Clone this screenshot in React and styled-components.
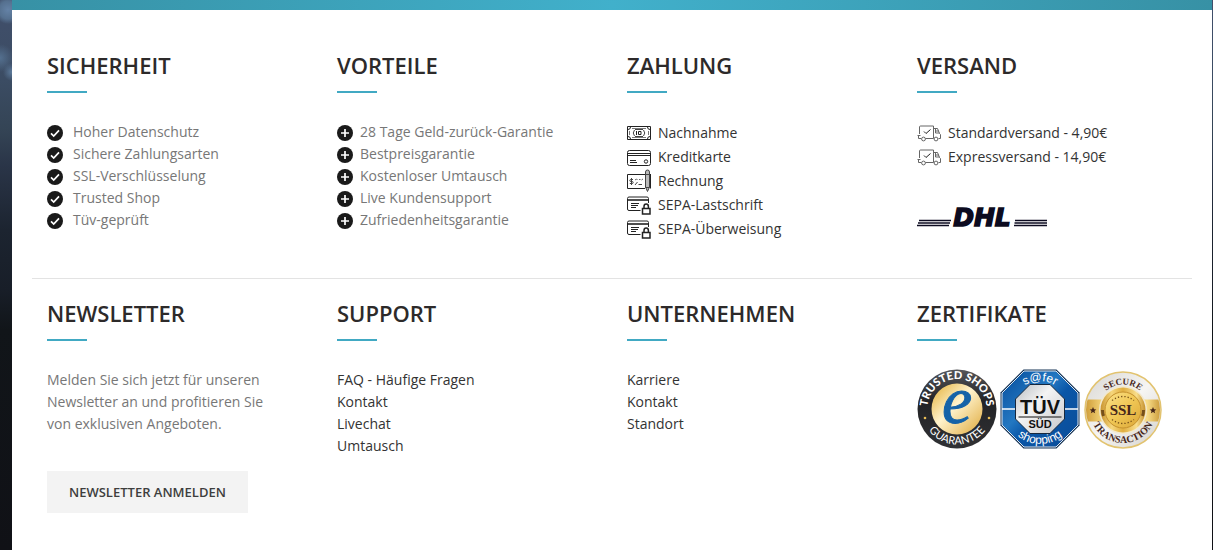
import React from "react";
import styled, {createGlobalStyle} from "styled-components";

const GlobalStyle = createGlobalStyle`
  * {
    box-sizing: border-box;
  }
  body {
    margin: 0;
    font-family: "Open Sans", "Noto Sans", sans-serif;
    font-size: 14px;
    line-height: 22px;
    color: #777;
    background: #101216;
  }
`;

const PageStyles = styled.div`
  min-height: 100vh;
  padding: 0 1px 0 12px;
  display: flex;
  flex-direction: column;
  background:
    radial-gradient(circle at 8px 10px, #6482a6 0, #55708f 9px, transparent 14px),
    radial-gradient(circle at 12px 72px, #5d7b9c 0, transparent 9px),
    radial-gradient(circle at 0 58px, #54708f 0, transparent 14px),
    linear-gradient(
      #414f6b 0,
      #3b4c63 80px,
      #344455 130px,
      #2a3548 165px,
      #1c2430 230px,
      #181e28 290px,
      #111519 330px,
      #101116 550px
    );
`;

const TopBar = styled.div`
  height: 10px;
  background: radial-gradient(circle, #41b0cb 0, #3791a5 100%);
`;

const Footer = styled.footer`
  flex: 1;
  padding: 0 20px;
  background: #fff;
`;

const Row = styled.div`
  display: grid;
  grid-template-columns: repeat(4, 1fr);
  padding: ${(p) => (p.$first ? "40px 0 37px" : "19px 0 36px")};
  border-bottom: ${(p) => (p.$first ? "1px solid #e3e3e3" : "none")};
`;

const Column = styled.section`
  padding: 0 15px;
`;

const Title = styled.h2`
  margin: 0 0 28px;
  font-size: 22px;
  font-weight: 600;
  line-height: 30px;
  color: #2d2a2a;
  text-transform: uppercase;

  &::after {
    content: "";
    display: block;
    width: 40px;
    height: 2px;
    margin-top: 11px;
    background: #41a9c3;
  }
`;

const List = styled.ul`
  margin: 0;
  padding: 0;
  list-style: none;
`;

const Item = styled.li`
  display: flex;
  align-items: center;
  gap: ${(p) => p.$gap || 7}px;
  min-height: 22px;

  svg {
    flex: none;
    margin-top: 2px;
  }
`;

const LinkItem = styled.li`
  a {
    display: flex;
    align-items: center;
    gap: 7px;
    color: #333;
    text-decoration: none;
  }
  a:hover {
    color: #41a9c3;
  }
  svg {
    flex: none;
    height: 24px;
  }
`;

const Text = styled.p`
  margin: 0 0 36px;
  padding-right: 30px;
`;

const Button = styled.button`
  height: 42px;
  padding: 0 22px;
  border: 0;
  background: #f3f3f3;
  color: #3e3e3e;
  font-family: inherit;
  font-size: 13px;
  font-weight: 600;
  text-transform: uppercase;
  cursor: pointer;
`;

const Carrier = styled.div`
  margin-top: 36px;

  svg {
    display: block;
  }
`;

const Badges = styled.div`
  display: flex;
  align-items: center;
  gap: 3px;
`;

const CheckIcon = () => (
  <svg width="16" height="16" viewBox="0 0 16 16" aria-hidden="true">
    <circle cx="8" cy="8" r="8" fill="#1a1a1a" />
    <path d="M4 8.4 6.7 11 12 5.4" fill="none" stroke="#fff" strokeWidth="1.7" />
  </svg>
);

const PlusIcon = () => (
  <svg width="16" height="16" viewBox="0 0 16 16" aria-hidden="true">
    <circle cx="8" cy="8" r="8" fill="#1a1a1a" />
    <path d="M8 4v8M4 8h8" stroke="#fff" strokeWidth="1.7" />
  </svg>
);

const LineIcon = ({children}) => (
  <svg
    width="24"
    height="24"
    viewBox="0 0 24 24"
    fill="none"
    stroke="#222"
    strokeWidth="1"
    aria-hidden="true"
  >
    {children}
  </svg>
);

const CashIcon = () => (
  <LineIcon>
    <path d="M.5 5.500h23v13H.5z" />
    <path d="M5 7.500h14M5 16.500h14M2.500 10v4M21.500 10v4" stroke="#777" />
    <path d="M1 8.500q2.500 0 2.500-2.500M23 8.500q-2.500 0-2.500-2.500M1 15.500q2.500 0 2.500 2.500M23 15.500q-2.500 0-2.500 2.500" />
    <path d="M7.500 9q-2.500 3 0 6M16.500 9q2.500 3 0 6M8 8.500h8M8 15.500h8" stroke="#444" />
    <path d="M9.500 10v4M11.500 10.500h2.500v3h-2.500z" />
  </LineIcon>
);

const CreditCardIcon = () => (
  <LineIcon>
    <rect x=".5" y="5.500" width="23" height="15" rx="2" />
    <path d="M.5 8.500h23M.5 10.500h23M3 15.500h6M3 17.500h7" />
    <circle cx="19" cy="16.500" r="1.700" />
  </LineIcon>
);

const InvoiceIcon = () => (
  <LineIcon>
    <path d="M18 5.500H.5v14H18M23.500 5v14.500" />
    <path
      d="M18.500 3q0-2 2-2t2 2v15l-2 4.500-2-4.500z"
      fill="#bbb"
      stroke="#444"
    />
    <path d="M18.500 5.500h4M18.500 18.500h4" stroke="#444" />
    <path d="M6 10.500H3.800q-1 0-1 1t1 1h1.400q1 0 1 1t-1 1H2.800M4.500 9v7" stroke="#444" />
    <path d="M8 11l1.500-1 1 1M12 10.500h1.500M14.500 11l1.500-1" stroke="#666" />
    <path d="M8 16l2.500-3M11.500 15.500H15" stroke="#444" />
  </LineIcon>
);

const SepaIcon = () => (
  <LineIcon>
    <path d="M21.500 10V5.500Q21.500 4 20 4H2Q.5 4 .5 5.500V16q0 1.500 1.500 1.500h11.500" />
    <path d="M.5 7h21" strokeWidth="1.600" />
    <path d="M4 10.500h8M4 12.500h7M4 14.500h5" />
    <path d="M15.500 15.500h7.500v5.500h-7.500zM17 15.500v-2q0-2.500 2.200-2.500t2.200 2.500v2" strokeWidth="1.500" />
  </LineIcon>
);

const TruckIcon = () => (
  <LineIcon>
    <g stroke="#666">
      <path d="M4 17.500H1.500V15M2.500 13V6q0-1 1-1h13v12.500H8.500M.5 14.500h3" />
      <path d="M16.500 7.500h4l2 5 1 1v4h-2M18.500 7.500v4.500h4M18 10h4" />
      <circle cx="6.500" cy="18" r="1.900" />
      <circle cx="19" cy="18" r="1.900" />
    </g>
    <path d="M7 10.500l2 2 4.500-4" />
  </LineIcon>
);

const DhlLogo = () => (
  <svg width="130" height="24" viewBox="0 0 130 24" role="img" aria-label="DHL">
    <path
      d="M2 15.500h32M1 18h32M0 20.500h32M98 15.500h32M97.500 18H130M97 20.500h33"
      stroke="#0c0b20"
      strokeWidth="1.400"
    />
    <text
      x="65"
      y="21"
      textAnchor="middle"
      fontFamily="DejaVu Sans, sans-serif"
      fontSize="25"
      fontWeight="700"
      fontStyle="oblique"
      fill="#0c0b20"
      stroke="#0c0b20"
      strokeWidth="1.500"
    >
      DHL
    </text>
  </svg>
);

const TrustedShops = () => (
  <svg width="80" height="80" viewBox="0 0 80 80" role="img" aria-label="Trusted Shops Guarantee">
    <defs>
      <linearGradient id="tsGold" x1="0" y1="0" x2="1" y2="1">
        <stop offset="0.1" stopColor="#e9bd55" />
        <stop offset="0.45" stopColor="#fff3cd" />
        <stop offset="1" stopColor="#dfa93a" />
      </linearGradient>
      <linearGradient id="tsRing" x1="0" y1="0" x2="0" y2="1">
        <stop offset="0" stopColor="#55565a" />
        <stop offset="0.4" stopColor="#222326" />
        <stop offset="1" stopColor="#303134" />
      </linearGradient>
      <path id="tsTop" d="M11.200 46A29.500 29.500 0 1 1 68.800 46" />
      <path id="tsBottom" d="M4.500 40A35.500 35.500 0 0 0 75.500 40" />
    </defs>
    <circle cx="40" cy="40" r="39.500" fill="url(#tsRing)" />
    <circle cx="40" cy="40" r="25.500" fill="url(#tsGold)" />
    <g fontFamily="Lato" fill="#fff" textAnchor="middle">
      <text fontSize="11" fontWeight="900">
        <textPath href="#tsTop" startOffset="50%">TRUSTED SHOPS</textPath>
      </text>
      <text fontSize="11">
        <textPath href="#tsBottom" startOffset="50%">GUARANTEE</textPath>
      </text>
    </g>
    <circle cx="8" cy="49" r="1.300" fill="#e9bd55" />
    <circle cx="72" cy="49" r="1.300" fill="#e9bd55" />
    <text
      x="40"
      y="54"
      textAnchor="middle"
      fontFamily="Liberation Serif"
      fontStyle="italic"
      fontSize="68"
      fill="#1563a8"
      stroke="#1563a8"
      strokeWidth="1"
    >
      e
    </text>
  </svg>
);

const TuvBadge = () => (
  <svg width="80" height="80" viewBox="0 0 80 80" role="img" aria-label="TÜV Süd safer shopping">
    <defs>
      <linearGradient id="tuvBlue" x1="0" y1="0" x2="1" y2="1">
        <stop offset="0" stopColor="#064c9b" />
        <stop offset="0.4" stopColor="#2378c2" />
        <stop offset="0.55" stopColor="#0a56a7" />
        <stop offset="1" stopColor="#0a4c98" />
      </linearGradient>
      <linearGradient id="tuvSilver" x1="0" y1="0" x2="1" y2="1">
        <stop offset="0" stopColor="#b9bcc0" />
        <stop offset="0.4" stopColor="#f4f4f4" />
        <stop offset="1" stopColor="#c4c6c9" />
      </linearGradient>
      <path id="tuvTop" d="M12 40A28 28 0 0 1 68 40" />
      <path id="tuvBottom" d="M5 40A35 35 0 0 0 75 40" />
    </defs>
    <path d="M23.500.5h33l23 23v33l-23 23h-33l-23-23v-33z" fill="#173557" />
    <path
      d="M24 2h32l22 22v32L56 78H24L2 56V24z"
      fill="url(#tuvBlue)"
      stroke="#dfe6ee"
      strokeWidth="1"
    />
    <path d="M2 40h14M64 40h14" stroke="#fff" strokeWidth="1.500" />
    <path
      d="M30 15.500h20L64.500 30v20L50 64.500H30L15.500 50V30z"
      fill="url(#tuvSilver)"
      stroke="#17283d"
      strokeWidth="1"
    />
    <path d="M18.500 48h43" stroke="#111" strokeWidth="1" />
    <g fontFamily="Liberation Sans" textAnchor="middle">
      <text x="40" y="45" fontSize="20" fontWeight="700" fill="#111">TÜV</text>
      <text x="40" y="59" fontSize="11" fontWeight="700" fill="#111">SÜD</text>
      <g fill="#fff" fontSize="12">
        <text>
          <textPath href="#tuvTop" startOffset="50%">s@fer</textPath>
        </text>
        <text>
          <textPath href="#tuvBottom" startOffset="50%">shopping</textPath>
        </text>
      </g>
    </g>
  </svg>
);

const SslBadge = () => (
  <svg width="80" height="80" viewBox="0 0 80 80" role="img" aria-label="SSL Secure Transaction">
    <defs>
      <linearGradient id="sslGold" x1="0" y1="0" x2="1" y2="0">
        <stop offset="0" stopColor="#c9942f" />
        <stop offset="0.25" stopColor="#f6d77c" />
        <stop offset="0.5" stopColor="#e0ae3f" />
        <stop offset="0.8" stopColor="#f8dd8a" />
        <stop offset="1" stopColor="#c48f2c" />
      </linearGradient>
      <linearGradient id="sslCore" x1="0" y1="0" x2="1" y2="1">
        <stop offset="0" stopColor="#fbe28a" />
        <stop offset="0.5" stopColor="#f0c755" />
        <stop offset="1" stopColor="#dba637" />
      </linearGradient>
      <linearGradient id="sslSilver" x1="0" y1="0" x2="1" y2="1">
        <stop offset="0" stopColor="#d8d6d2" />
        <stop offset="0.5" stopColor="#f6f5f3" />
        <stop offset="1" stopColor="#d4d1cc" />
      </linearGradient>
      <clipPath id="sslClip">
        <circle cx="40" cy="41" r="37" />
      </clipPath>
      <path id="sslTop" d="M14.500 41A25.500 25.500 0 0 1 65.500 41" />
      <path id="sslBottom" d="M7 41A33 33 0 0 0 73 41" />
    </defs>
    <circle cx="40" cy="41" r="38" fill="url(#sslSilver)" stroke="#e2c36f" strokeWidth="1.500" />
    <path d="M0 30.500h80v22H0z" fill="url(#sslGold)" clipPath="url(#sslClip)" />
    <circle cx="40" cy="41" r="24" fill="#f3e9cd" />
    <circle cx="40" cy="41" r="22.500" fill="url(#sslGold)" />
    <path
      d="M19.500 41a20.500 20.500 0 0 0 1 6M60.500 41a20.500 20.500 0 0 1-1 6"
      fill="none"
      stroke="#76501b"
      strokeWidth="3"
    />
    <circle cx="40" cy="41" r="18" fill="url(#sslCore)" stroke="#c6922e" />
    <path
      d="M29 31.500q11-8 22 0M29 50.500q11 8 22 0"
      fill="none"
      stroke="#755018"
      strokeWidth="1.300"
      strokeDasharray="1.300 2"
    />
    <g fill="#46271b">
      <path id="star" d="M10 38l1 2.200 2.300.2-1.800 1.600.6 2.300-2.100-1.200-2.100 1.200.6-2.300-1.800-1.600 2.300-.2z" />
      <use href="#star" x="60" />
      <g fontFamily="Liberation Serif" fontWeight="700" textAnchor="middle">
        <text x="40" y="46" fontSize="15">SSL</text>
        <text fontSize="9">
          <textPath href="#sslTop" startOffset="50%">SECURE</textPath>
        </text>
        <text fontSize="10">
          <textPath href="#sslBottom" startOffset="50%">TRANSACTION</textPath>
        </text>
      </g>
    </g>
  </svg>
);

const security = [
  "Hoher Datenschutz",
  "Sichere Zahlungsarten",
  "SSL-Verschlüsselung",
  "Trusted Shop",
  "Tüv-geprüft",
];

const benefits = [
  "28 Tage Geld-zurück-Garantie",
  "Bestpreisgarantie",
  "Kostenloser Umtausch",
  "Live Kundensupport",
  "Zufriedenheitsgarantie",
];

const payments = [
  {label: "Nachnahme", icon: <CashIcon />},
  {label: "Kreditkarte", icon: <CreditCardIcon />},
  {label: "Rechnung", icon: <InvoiceIcon />},
  {label: "SEPA-Lastschrift", icon: <SepaIcon />},
  {label: "SEPA-Überweisung", icon: <SepaIcon />},
];

const shipping = [
  {label: "Standardversand - 4,90€", icon: <TruckIcon />},
  {label: "Expressversand - 14,90€", icon: <TruckIcon />},
];

const support = [
  {label: "FAQ - Häufige Fragen"},
  {label: "Kontakt"},
  {label: "Livechat"},
  {label: "Umtausch"},
];

const company = [{label: "Karriere"}, {label: "Kontakt"}, {label: "Standort"}];

const LinkList = ({items}) => (
  <List>
    {items.map((item) => (
      <LinkItem key={item.label}>
        <a href="#">
          {item.icon}
          {item.label}
        </a>
      </LinkItem>
    ))}
  </List>
);

const App = () => {
  return (
    <PageStyles>
      <GlobalStyle />
      <TopBar />
      <Footer>
        <Row $first>
          <Column>
            <Title>Sicherheit</Title>
            <List>
              {security.map((label) => (
                <Item key={label} $gap={10}>
                  <CheckIcon />
                  {label}
                </Item>
              ))}
            </List>
          </Column>
          <Column>
            <Title>Vorteile</Title>
            <List>
              {benefits.map((label) => (
                <Item key={label}>
                  <PlusIcon />
                  {label}
                </Item>
              ))}
            </List>
          </Column>
          <Column>
            <Title>Zahlung</Title>
            <LinkList items={payments} />
          </Column>
          <Column>
            <Title>Versand</Title>
            <LinkList items={shipping} />
            <Carrier>
              <DhlLogo />
            </Carrier>
          </Column>
        </Row>
        <Row>
          <Column>
            <Title>Newsletter</Title>
            <Text>
              Melden Sie sich jetzt für unseren Newsletter an und profitieren Sie
              von exklusiven Angeboten.
            </Text>
            <Button type="button">Newsletter anmelden</Button>
          </Column>
          <Column>
            <Title>Support</Title>
            <LinkList items={support} />
          </Column>
          <Column>
            <Title>Unternehmen</Title>
            <LinkList items={company} />
          </Column>
          <Column>
            <Title>Zertifikate</Title>
            <Badges>
              <TrustedShops />
              <TuvBadge />
              <SslBadge />
            </Badges>
          </Column>
        </Row>
      </Footer>
    </PageStyles>
  );
};

export default App;
